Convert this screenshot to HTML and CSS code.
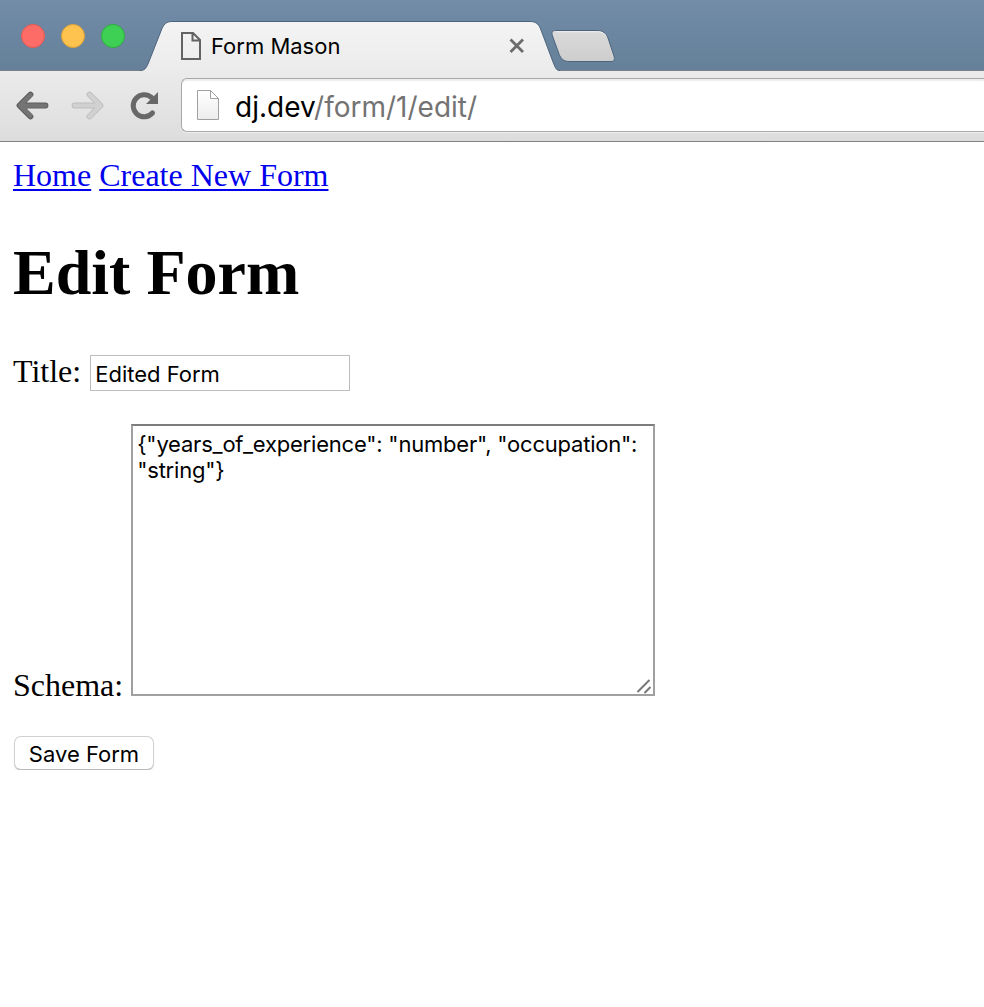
FILE: index.html
```html
<!DOCTYPE html>
<html lang="en">
<head>
<meta charset="utf-8">
<title>Form Mason</title>
<link rel="stylesheet" href="styles.css">
</head>
<body>
<header class="browser">
  <div class="tabstrip">
    <div class="lights">
      <span class="light red"></span><span class="light yellow"></span><span class="light green"></span>
    </div>
    <div class="tab">
      <svg class="tab-shape" width="480" height="72" viewBox="140 0 480 72">
        <defs>
          <linearGradient id="tabfill" x1="0" y1="0" x2="0" y2="1"><stop offset="0" stop-color="#f4f4f4"/><stop offset="1" stop-color="#ebebeb"/></linearGradient>
          <linearGradient id="newfill" x1="0" y1="0" x2="0" y2="1"><stop offset="0" stop-color="#dadada"/><stop offset="1" stop-color="#cdcdcd"/></linearGradient>
        </defs>
        <path d="M140 70.5C145 70.5 146 68 148 64L161 31C163.500 24.500 166 21.500 172 21.500H530C537 21.500 539 25 541 30L553 62C555.500 68 556 70.500 560 70.500V72H140Z" fill="url(#tabfill)"/>
        <path d="M140 70.5C145 70.5 146 68 148 64L161 31C163.500 24.500 166 21.500 172 21.500H530C537 21.500 539 25 541 30L553 62C555.500 68 556 70.500 560 70.500" fill="none" stroke="#4c647d"/>
        <path d="M555.500 30.500H597C603 30.500 606 33 608 38L614 56C615 60 614 61.500 611 61.500H569C564 61.500 561 59 559 54L552.500 36C551.500 32 552 30.500 555.500 30.500Z" fill="url(#newfill)" stroke="#4c647d"/>
        <path d="M556 31.700H597C601 31.700 604 33 606 36" fill="none" stroke="#eee"/>
      </svg>
      <svg class="tab-icon" width="22" height="30" viewBox="0 0 22 30"><path d="M2 2H13L20 9V28H2Z M12.500 2V9.500H20" fill="none" stroke="#636363" stroke-width="2"/></svg>
      <span class="tab-title">Form Mason</span>
      <svg class="tab-close" width="16" height="16" viewBox="0 0 16 16"><path d="M1.500 1.500L14 14M14 1.500L1.500 14" stroke="#6b6b6b" stroke-width="2.800"/></svg>
    </div>
  </div>
  <div class="toolbar">
    <svg class="nav" width="181" height="70" viewBox="0 71 181 70">
      <path d="M45.500 105.500H21M30.500 94.500L19.500 105.500L30.500 116.500" fill="none" stroke="#5c5c5c" stroke-width="5.800" stroke-linecap="round" stroke-linejoin="round"/>
      <path d="M45.500 105.700H21M30.500 95L20 105.500L30.500 116" fill="none" stroke="#747474" stroke-width="4.300" stroke-linecap="round" stroke-linejoin="round"/>
      <path d="M74.500 105.500H99M89.500 94.500L100.500 105.500L89.500 116.500" fill="none" stroke="#bdbdbd" stroke-width="5.800" stroke-linecap="round" stroke-linejoin="round"/>
      <path d="M74.500 105.500H99M89.500 94.500L100.500 105.500L89.500 116.500" fill="none" stroke="#d1d1d1" stroke-width="4" stroke-linecap="round" stroke-linejoin="round"/>
      <path d="M152.500 113A11 11 0 1 1 151.500 97.500" fill="none" stroke="#686868" stroke-width="5" stroke-linecap="round"/>
      <path d="M158 92V104H146Z" fill="#686868"/>
    </svg>
    <div class="address">
      <svg class="page-icon" width="24" height="32" viewBox="0 0 24 32">
        <defs><linearGradient id="paper" x1="0" y1="0" x2="0" y2="1"><stop offset="0" stop-color="#fff"/><stop offset="1" stop-color="#ededed"/></linearGradient></defs>
        <path d="M1.500 1.500H14.500L22.500 9.500V30.500H1.500Z M14.500 1.500V9.500H22.500" fill="url(#paper)" stroke="#a0a0a0"/>
      </svg>
      <span class="url"><b class="host">dj.dev</b>/form/1/edit/</span>
    </div>
  </div>
</header>
<main class="page">
  <nav class="links"><a href="#">Home</a> <a href="#">Create New Form</a></nav>
  <h1 class="heading">Edit Form</h1>
  <form class="form">
    <div class="row"><label class="label" for="title">Title:</label><input class="title-input" id="title" type="text" value="Edited Form"></div>
    <div class="row schema-row"><label class="label schema-label" for="schema">Schema:</label><div class="area-wrap"><textarea class="schema" id="schema" spellcheck="false">{"years_of_experience": "number", "occupation": "string"}</textarea><svg class="grip" width="16" height="16" viewBox="0 0 16 16"><path d="M1.500 14L13.500 2M8.500 15L14.500 9" stroke="#777" stroke-width="2"/></svg></div></div>
    <button class="save" type="button">Save Form</button>
  </form>
</main>
</body>
</html>
```

FILE: styles.css
```css
body { margin: 0; background: #fff; color: #000; font-family: "Liberation Serif", serif; overflow: hidden; }
.tabstrip { height: 70px; display: flex; background: linear-gradient(#728ca9, #658098); border-bottom: 1px solid #77818c; }
.lights { display: flex; gap: 16px; padding: 24px 0 0 21px; width: 119px; }
.light { width: 24px; height: 24px; border-radius: 50%; box-sizing: border-box; border: 1px solid; }
.red { background: #fe6c67; border-color: #e45953; }
.yellow { background: #fec34e; border-color: #dda136; }
.green { background: #3ed054; border-color: #2eaf3c; }
.tab { position: relative; width: 480px; height: 72px; display: flex; align-items: flex-start; }
.tab-shape { position: absolute; left: 0; top: 0; }
.tab-icon, .tab-title, .tab-close { position: relative; }
.tab-icon { margin: 31px 0 0 40px; }
.tab-title { width: 298px; margin: 31px 0 0 9px; font: 22px/30px Inter, sans-serif; white-space: nowrap; }
.tab-close { margin-top: 38px; }
.toolbar { position: relative; height: 70px; display: flex; background: linear-gradient(#ebebeb, #dddddd); border-bottom: 1px solid #818181; }
.nav { flex: none; }
.address { flex: 1; height: 52px; margin-top: 7px; display: flex; align-items: center; background: #fff; border: 1px solid #a8a8a8; border-right: 0; border-radius: 6px 0 0 6px; box-shadow: inset 0 2px 1px #eee, 0 1px #eee; }
.page-icon { margin-left: 14px; }
.url { margin-left: 15px; padding-top: 3px; font: 28px/40px Inter, sans-serif; color: #737373; white-space: nowrap; }
.host { color: #000; font-weight: 400; }
.page { padding: 15px 13px 0; font-size: 32px; line-height: 36px; }
.links a { color: #0000ee; text-decoration-thickness: 2px; text-underline-offset: 3px; }
.heading { margin: 44px 0; font-size: 64px; line-height: 72px; }
.form { display: flex; flex-direction: column; align-items: flex-start; }
.row { display: flex; align-items: flex-start; }
.title-input { width: 260px; height: 36px; box-sizing: border-box; margin: 2px 0 0 9px; padding: 2px 4px 0; border: 1px solid #bdbdbd; font: 22px Inter, sans-serif; }
.schema-row { margin-top: 33px; align-items: flex-end; }
.schema-label { margin-bottom: -7px; }
.area-wrap { position: relative; margin-left: 8px; height: 272px; }
.schema { display: block; box-sizing: border-box; width: 524px; height: 272px; padding: 5px 4px; border: 2px solid #a0a0a0; border-top-color: #7d7d7d; resize: none; overflow: hidden; font: 22px/26px Inter, sans-serif; letter-spacing: -0.21px; }
.grip { position: absolute; right: 3px; bottom: 2px; }
.save { width: 140px; height: 34px; margin: 40px 0 0 1px; padding: 2px 0 0; border: 1px solid #d0d0d0; border-bottom-color: #b8b8b8; border-radius: 7px; background: #fff; box-shadow: 0 1px 1px #ddd; color: #000; font: 22px/28px Inter, sans-serif; }
```
